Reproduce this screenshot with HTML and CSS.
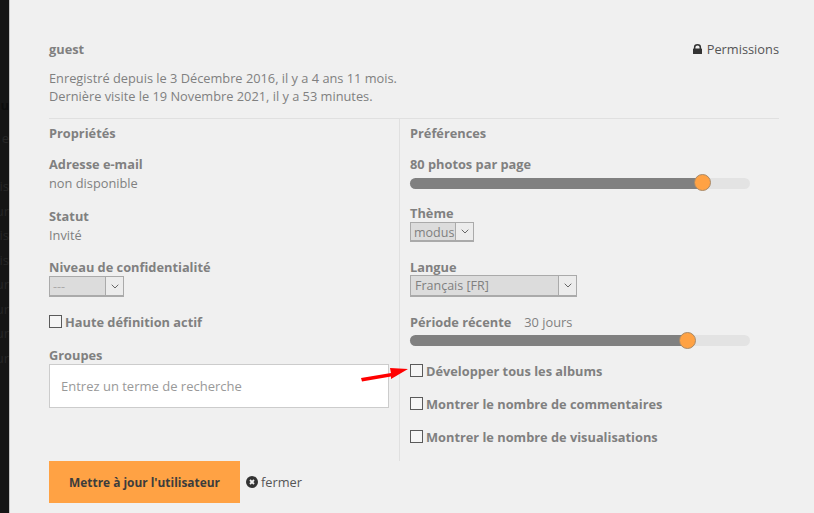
FILE: index.html
```html
<!DOCTYPE html>
<html lang="fr">
<head>
<meta charset="utf-8">
<title>guest</title>
<link rel="stylesheet" href="styles.css">
</head>
<body>
<div class="backdrop">
  <span class="strong">u</span>
  <span class="after-head">e</span>
  <span class="after-gap">is</span>
  <span>ur</span>
  <span>is</span>
  <span>is</span>
  <span>ur</span>
  <span>ur</span>
  <span>ur</span>
  <span>ur</span>
</div>
<main class="panel">
  <header class="head">
    <strong class="name">guest</strong>
    <a class="perm">
      <svg class="lock" viewBox="0 0 10 11" width="9" height="10"><path fill="#333" d="M1 5V3.400a4 3.400 0 0 1 8 0V5h.4c.4 0 .6.2.6.6v4.800c0 .4-.2.6-.6.6H.6c-.4 0-.6-.2-.6-.6V5.600C0 5.200.2 5 .6 5zm1.700 0h4.600V3.500a2.300 2 0 0 0-4.600 0z"/></svg>
      Permissions
    </a>
  </header>
  <p class="since">Enregistré depuis le 3 Décembre 2016, il y a 4 ans 11 mois.<br>Dernière visite le 19 Novembre 2021, il y a 53 minutes.</p>
  <div class="cols">
    <section class="col left">
      <h2>Propriétés</h2>
      <div class="f email"><b>Adresse e-mail</b><span>non disponible</span></div>
      <div class="f status"><b>Statut</b><span>Invité</span></div>
      <div class="f conf"><b>Niveau de confidentialité</b>
        <div class="sel sel-conf"><span class="dim">---</span><i class="arrow"><svg viewBox="0 0 8 5" width="8" height="5"><path d="M.7.7 4 4l3.300-3.300" fill="none" stroke="#666" stroke-width="1"/></svg></i></div>
      </div>
      <label class="chk hd"><span class="box"></span>Haute définition actif</label>
      <div class="f groups"><b>Groupes</b>
        <div class="search">Entrez un terme de recherche</div>
      </div>
    </section>
    <section class="col right">
      <h2>Préférences</h2>
      <div class="f photos"><b>80 photos par page</b>
        <div class="slider slider-a"><div class="fill fill-a"></div><span class="thumb"></span></div>
      </div>
      <div class="f theme"><b>Thème</b>
        <div class="sel sel-theme"><span>modus</span><i class="arrow"><svg viewBox="0 0 8 5" width="8" height="5"><path d="M.7.7 4 4l3.300-3.300" fill="none" stroke="#666" stroke-width="1"/></svg></i></div>
      </div>
      <div class="f lang"><b>Langue</b>
        <div class="sel sel-lang"><span>Français [FR]</span><i class="arrow"><svg viewBox="0 0 8 5" width="8" height="5"><path d="M.7.7 4 4l3.300-3.300" fill="none" stroke="#666" stroke-width="1"/></svg></i></div>
      </div>
      <div class="f recent"><div class="rl"><b>Période récente</b><span>30 jours</span></div>
        <div class="slider slider-b"><div class="fill fill-b"></div><span class="thumb"></span></div>
      </div>
      <label class="chk c1"><span class="box"></span>Développer tous les albums
        <svg class="pointer" viewBox="0 0 48 16" width="48" height="16"><path fill="#f00" d="M0 12 30 7 29 2 47 3 30 13 30 10.500 1 15.500z"/></svg>
      </label>
      <label class="chk c2"><span class="box"></span>Montrer le nombre de commentaires</label>
      <label class="chk c3"><span class="box"></span>Montrer le nombre de visualisations</label>
    </section>
  </div>
  <footer class="foot">
    <button class="save">Mettre à jour l'utilisateur</button>
    <a class="close"><svg viewBox="0 0 12 12" width="12" height="12"><circle cx="6" cy="6" r="6" fill="#333"/><path d="M4 4l4 4M8 4l-4 4" stroke="#f0f0f0" stroke-width="1.800"/></svg> fermer</a>
  </footer>
</main>
</body>
</html>
```
FILE: styles.css
```css
* { box-sizing: border-box; }
html, body { margin: 0; height: 513px; overflow: hidden; }
body { display: flex; font-family: "Open Sans", sans-serif; font-size: 12.800px; color: #808080; background: #f0f0f0; }
.backdrop { width: 10px; flex: none; background: #151515; border-right: 1px solid #c4c4c4; color: #262626; overflow: hidden; font-size: 13px; padding-top: 96px; display: flex; flex-direction: column; gap: 5.500px; line-height: 19px; align-items: flex-end; }
.backdrop span { white-space: nowrap; }
.backdrop .strong { font-weight: 700; color: #0c0c0c; }
.backdrop .after-head { margin-top: 8px; }
.backdrop .after-gap { margin-top: 24px; }
.panel { flex: 1; min-width: 0; padding: 40px 35px 0 39px; }
.head { display: flex; justify-content: space-between; height: 18px; line-height: 18px; align-items: center; }
.name { font-weight: 700; color: #808080; }
.perm { color: #555; display: flex; align-items: center; gap: 5px; }
.since { margin: 11px 0 0; line-height: 18px; height: 50px; border-bottom: 1px solid #e0e0e0; }
.cols { display: flex; height: 342px; }
.col h2 { font-size: 12.800px; font-weight: 700; margin: 0; line-height: 18px; padding-top: 5px; height: 23px; }
.left { width: 351px; padding-right: 10px; border-right: 1px solid #e0e0e0; }
.right { flex: 1; padding-left: 10px; }
.f b { display: block; font-weight: 700; line-height: 18px; }
.f > span { display: block; line-height: 19px; padding-top: 1px; }
.email { margin-top: 13px; }
.status { margin-top: 14px; }
.conf { margin-top: 13px; }
.sel { display: flex; height: 21px; border: 1px solid #aaa; border-bottom-width: 2px; background: #dcdcdc; line-height: 19px; padding-left: 3px; justify-content: space-between; color: #808080; font-size: 12.500px; }
.arrow { width: 18px; flex: none; border-left: 1px solid #aaa; background: #ececec; display: flex; align-items: center; justify-content: center; }
.sel-conf { width: 75px; }
.dim { color: #aaa; }
.sel-theme { width: 64px; height: 20px; }
.sel-lang { width: 167px; height: 22px; margin-top: -1px; padding-left: 4px; }
.chk { display: flex; align-items: center; position: relative; font-weight: 700; line-height: 18px; gap: 3px; }
.box { width: 13px; height: 13px; border: 1px solid #5a5a5a; background: #f5f5f5; flex: none; position: relative; top: -1px; }
.hd { margin-top: 16px; }
.groups { margin-top: 15px; }
.search { height: 44px; background: #fff; border: 1px solid #ccc; padding-left: 11px; line-height: 42px; color: #999; font-size: 13px; }
.slider { position: relative; height: 11px; width: 340px; background: #e3e3e3; border-radius: 6px; }
.slider-a { margin-top: 5px; }
.slider-b { margin-top: 4px; }
.fill { height: 11px; background: #808080; border-radius: 6px; }
.fill-a { width: 292px; }
.fill-b { width: 278px; }
.thumb { position: absolute; width: 17px; height: 17px; border-radius: 50%; background: #ffa244; border: 1px solid #a88a6a; }
.fill-a + .thumb { left: 284px; top: -4px; }
.fill-b + .thumb { left: 269px; top: -3px; }
.photos { margin-top: 13px; }
.theme { margin-top: 15px; }
.lang { margin-top: 16px; }
.recent { margin-top: 16px; }
.rl { display: flex; gap: 13px; line-height: 18px; }
.c1 { margin-top: 16px; }
.c2 { margin-top: 15px; }
.c3 { margin-top: 15px; }
.pointer { position: absolute; left: -49px; top: 4px; }
.foot { display: flex; align-items: center; gap: 6px; }
.save { width: 191px; height: 42px; background: #ffa244; border: 0; font: 700 11.900px "Open Sans", sans-serif; color: #3c3c3c; padding: 0; }
.close { color: #555; display: flex; align-items: center; gap: 3px; }
```
